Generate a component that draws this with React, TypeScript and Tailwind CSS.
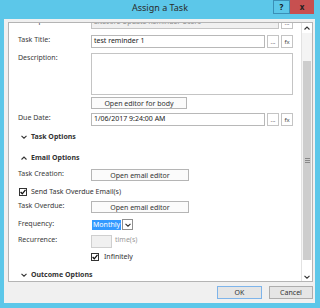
import React from "react";

const Chevron = ({ up = false }: { up?: boolean }) => (
  <svg width="6" height="4" viewBox="0 0 6 4" className="shrink-0">
    {up ? (
      <polyline points="0.5,3.5 3,1 5.5,3.5" fill="none" stroke="#333" strokeWidth="1.1" />
    ) : (
      <polyline points="0.5,0.8 3,3.2 5.5,0.8" fill="none" stroke="#333" strokeWidth="1.1" />
    )}
  </svg>
);

const Check = () => (
  <div className="w-[8px] h-[8px] border border-[#333] bg-white flex items-center justify-center shrink-0">
    <svg width="6" height="6" viewBox="0 0 6 6">
      <polyline points="0.6,3 2.3,4.8 5.5,0.8" fill="none" stroke="#111" strokeWidth="1.3" />
    </svg>
  </div>
);

const SmallBtn = ({ children }: { children: React.ReactNode }) => (
  <div className="w-[12px] h-[13px] border border-[#c4c4c4] bg-white flex items-center justify-center text-[6px] text-[#444] leading-none shrink-0">
    {children}
  </div>
);

const Label = ({ children }: { children: React.ReactNode }) => (
  <div className="w-[73px] shrink-0 leading-[10px] text-[#3a3a3a]">{children}</div>
);

const Header = ({ up = false, children }: { up?: boolean; children: React.ReactNode }) => (
  <div className="flex items-center h-[12px] pl-[12px] gap-[4px]">
    <Chevron up={up} />
    <span className="font-bold text-[#333] text-[7px] leading-[10px]">{children}</span>
  </div>
);

const WideBtn = ({ children, w }: { children: React.ReactNode; w: string }) => (
  <div className={`${w} h-[12px] border border-[#b5b5b5] bg-[#fbfbfb] flex items-center justify-center text-[#333] leading-none`}>
    {children}
  </div>
);

export default function App() {
  return (
    <div className="w-[320px] h-[308px] bg-[#5cc7e9] flex flex-col font-['Noto_Sans',sans-serif] text-[7px] overflow-hidden">
      {/* title bar */}
      <div className="h-[19px] grid grid-cols-[1fr_auto_1fr] items-start shrink-0">
        <div />
        <div className="text-[9px] text-[#2a2a2a] pt-[2px] leading-[12px]">Assign a Task</div>
        <div className="flex justify-end pr-[6px]">
          <div className="w-[17px] h-[14px] border border-[#3b8fb6] flex items-center justify-center text-[8px] font-bold text-[#111] leading-none">
            ?
          </div>
          <div className="w-[24px] h-[14px] bg-[#c75050] flex items-center justify-center text-[8px] font-bold text-[#222] leading-none">
            x
          </div>
        </div>
      </div>

      {/* client */}
      <div className="ml-[4px] w-[311px] h-[284px] bg-[#f0f0f0] flex flex-col shrink-0">
        <div className="mt-[3px] ml-[4px] w-[305px] h-[260px] bg-white border border-[#b4b4b4] flex overflow-hidden shrink-0">
          {/* content */}
          <div className="flex-1 flex flex-col overflow-hidden">
            {/* Participants (scrolled) */}
            <div className="flex items-start pl-[9px] -mt-[7px]">
              <Label>Participants:</Label>
              <div className="w-[188px] h-[13px] border border-[#c4c4c4] bg-[#f0f0f0] flex items-center pl-[2px] text-[#8a8a8a]">
                Sitecore Update Reminder Users
              </div>
              <div className="ml-[2px]">
                <SmallBtn>...</SmallBtn>
              </div>
            </div>

            {/* Task Title */}
            <div className="flex items-start pl-[9px] mt-[6px]">
              <Label>Task Title:</Label>
              <div className="w-[174px] h-[13px] border border-[#b8b8b8] bg-white flex items-center pl-[2px] text-[#222]">
                test reminder 1
              </div>
              <div className="ml-[2px] flex gap-[2px]">
                <SmallBtn>...</SmallBtn>
                <SmallBtn>fx</SmallBtn>
              </div>
            </div>

            {/* Description */}
            <div className="flex items-start pl-[9px] mt-[5px]">
              <Label>Description:</Label>
              <div className="w-[202px] h-[42px] border border-[#c4c4c4] bg-white" />
            </div>
            <div className="flex pl-[91px] -ml-[9px] mt-[2px]">
              <div className="pl-[0px]">
                <WideBtn w="w-[96px]">Open editor for body</WideBtn>
              </div>
            </div>

            {/* Due Date */}
            <div className="flex items-start pl-[9px] mt-[4px]">
              <Label>Due Date:</Label>
              <div className="w-[174px] h-[13px] border border-[#b8b8b8] bg-white flex items-center pl-[2px] text-[#222]">
                1/06/2017 9:24:00 AM
              </div>
              <div className="ml-[2px] flex gap-[2px]">
                <SmallBtn>...</SmallBtn>
                <SmallBtn>fx</SmallBtn>
              </div>
            </div>

            {/* Task Options */}
            <div className="mt-[5px]">
              <Header>Task Options</Header>
            </div>
            <div className="ml-[8px] w-[278px] h-px bg-[#e6e6e6] mt-[2px]" />

            {/* Email Options */}
            <div className="mt-[7px]">
              <Header up>Email Options</Header>
            </div>

            <div className="flex items-start pl-[9px] mt-[5px]">
              <Label>Task Creation:</Label>
              <WideBtn w="w-[98px]">Open email editor</WideBtn>
            </div>

            <div className="flex items-center pl-[10px] mt-[6px] gap-[4px]">
              <Check />
              <span className="text-[#333] leading-[10px]">Send Task Overdue Email(s)</span>
            </div>

            <div className="flex items-start pl-[9px] mt-[4px]">
              <Label>Task Overdue:</Label>
              <WideBtn w="w-[98px]">Open email editor</WideBtn>
            </div>

            <div className="flex items-start pl-[9px] mt-[6px]">
              <Label>Frequency:</Label>
              <div className="flex items-center h-[11px]">
                <div className="h-[10px] bg-[#3399ff] text-white flex items-center px-[1px] leading-none ml-[1px]">
                  Monthly
                </div>
                <div className="w-[11px] h-[11px] border border-[#8f8f8f] bg-white flex items-center justify-center ml-[1px]">
                  <Chevron />
                </div>
              </div>
            </div>

            <div className="flex items-start pl-[9px] mt-[5px]">
              <Label>Recurrence:</Label>
              <div className="w-[21px] h-[13px] border border-[#cfcfcf] bg-[#f0f0f0]" />
              <span className="ml-[3px] leading-[10px] text-[#9a9a9a]">time(s)</span>
            </div>

            <div className="flex items-center pl-[82px] mt-[4px] gap-[5px]">
              <Check />
              <span className="text-[#333] leading-[10px]">Infinitely</span>
            </div>

            <div className="mt-[7px]">
              <Header>Outcome Options</Header>
            </div>
          </div>

          {/* scrollbar */}
          <div className="w-[11px] flex flex-col border-l border-[#e2e2e2] bg-[#f4f4f4] shrink-0">
            <div className="h-[10px] flex items-center justify-center bg-white">
              <Chevron up />
            </div>
            <div className="h-[28px]" />
            <div className="h-[199px] bg-[#cdcdcd] flex items-center justify-center mx-[1px]">
              <div className="flex flex-col gap-[1px]">
                <div className="w-[5px] h-px bg-[#888]" />
                <div className="w-[5px] h-px bg-[#888]" />
                <div className="w-[5px] h-px bg-[#888]" />
              </div>
            </div>
            <div className="h-[12px] bg-white" />
            <div className="h-[9px] flex items-center justify-center bg-white">
              <Chevron />
            </div>
          </div>
        </div>

        {/* bottom buttons */}
        <div className="flex justify-end gap-[7px] mt-[4px] pr-[2px]">
          <div className="w-[45px] h-[13px] border border-[#7eb4ea] bg-[#e5e5e5] flex items-center justify-center text-[#333] leading-none">
            OK
          </div>
          <div className="w-[44px] h-[13px] border border-[#adadad] bg-[#e5e5e5] flex items-center justify-center text-[#333] leading-none">
            Cancel
          </div>
        </div>
      </div>
    </div>
  );
}
